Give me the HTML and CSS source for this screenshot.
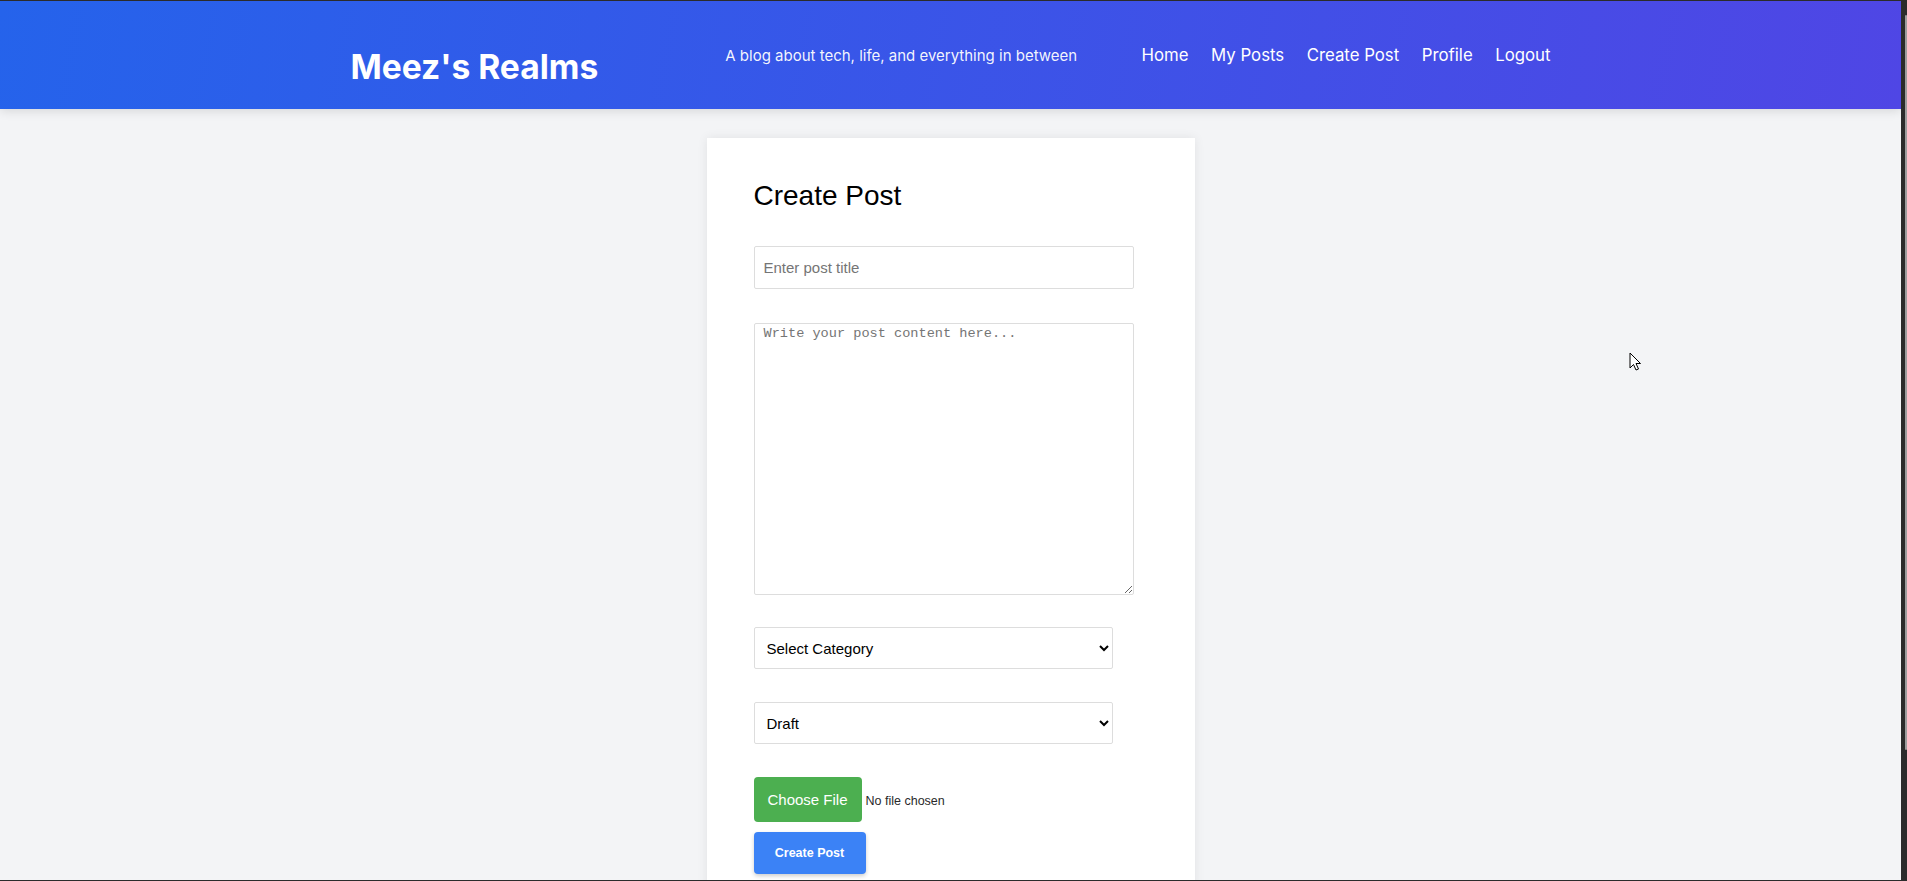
FILE: index.html
```html
<!DOCTYPE html>
<html lang="en">
<head>
<meta charset="utf-8">
<title>Create Post - Meez's Realms</title>
<link rel="stylesheet" href="styles.css">
</head>
<body>
<div class="viewport">
  <header class="site-header">
    <div class="header-inner">
      <a class="logo" href="#">Meez's Realms</a>
      <p class="tagline">A blog about tech, life, and everything in between</p>
      <nav class="nav">
        <a href="#">Home</a>
        <a href="#">My Posts</a>
        <a href="#">Create Post</a>
        <a href="#">Profile</a>
        <a href="#">Logout</a>
      </nav>
    </div>
  </header>
  <main class="main">
    <section class="card">
      <h2 class="card-title">Create Post</h2>
      <form class="post-form">
        <input class="field field-title" type="text" placeholder="Enter post title">
        <textarea class="field field-content" placeholder="Write your post content here..."></textarea>
        <select class="field field-select">
          <option>Select Category</option>
        </select>
        <select class="field field-select">
          <option>Draft</option>
        </select>
        <div class="file-row">
          <label class="file-btn" for="image">Choose File</label>
          <input class="file-input" id="image" type="file">
          <span class="file-name">No file chosen</span>
        </div>
        <button class="submit-btn" type="button">Create Post</button>
      </form>
    </section>
  </main>
  <svg class="cursor" width="14" height="20" viewBox="0 0 14 20"><path d="M1 1 L1 16 L4.5 12.5 L7 18 L9.5 17 L7 11.5 L11.5 11.5 Z" fill="#fff" stroke="#000" stroke-width="1" stroke-linejoin="miter"/></svg>
</div>
<div class="scrollbar"><div class="scroll-thumb"></div></div>
</body>
</html>
```
FILE: styles.css
```css
html {
  background: #2b2b2b;
  height: 100%;
  overflow: hidden;
}

body {
  margin: 0;
  height: 881px;
  display: flex;
  font-family: "Liberation Sans", Arial, sans-serif;
}

.viewport {
  position: relative;
  flex: 1;
  margin: 1px 0;
  background: #f3f4f6;
  overflow: hidden;
}

.scrollbar {
  width: 6px;
  background: #2b2b2b;
  display: flex;
  justify-content: flex-end;
}

.scroll-thumb {
  margin-top: 15px;
  width: 2px;
  height: 735px;
  background: #9d9d9d;
  border-radius: 1px;
}

.site-header {
  height: 108px;
  background: linear-gradient(100deg, #2563eb 0%, #4f46e5 100%);
  box-shadow: 0 2px 10px rgba(0, 0, 0, 0.12);
  color: #fff;
  font-family: Inter, "Noto Sans", sans-serif;
}

.header-inner {
  width: 1200px;
  height: 100%;
  margin: 0 auto;
  display: flex;
  align-items: center;
}

.logo {
  margin-top: 22px;
  font-size: 33.6px;
  font-weight: 700;
  color: #fff;
  text-decoration: none;
}

.tagline {
  margin: 0 0 0 127px;
  font-size: 15px;
  color: rgba(255, 255, 255, 0.95);
}

.nav {
  margin-left: auto;
  display: flex;
  gap: 22.5px;
}

.nav a {
  color: #fff;
  text-decoration: none;
  font-size: 16.8px;
}

.main {
  padding-top: 29px;
  display: flex;
  justify-content: center;
}

.card {
  width: 488px;
  box-sizing: border-box;
  padding: 42px 47px 40px;
  background: #fff;
  box-shadow: 0 0 10px rgba(0, 0, 0, 0.08);
}

.card-title {
  margin: 0 0 34px;
  font-size: 28px;
  font-weight: 400;
  color: #000;
}

.post-form {
  display: flex;
  flex-direction: column;
  align-items: flex-start;
}

.field {
  box-sizing: border-box;
  border: 1px solid #ddd;
  border-radius: 2px;
  background: #fff;
  margin: 0 0 33px;
}

.field-title {
  width: 380px;
  height: 43px;
  padding: 12px 9px;
  margin-bottom: 34px;
  font: 15px "Liberation Sans", Arial, sans-serif;
  color: #000;
}

.field-title::placeholder {
  color: #757575;
}

.field-content {
  width: 380px;
  height: 272px;
  padding: 2px 9px;
  margin-bottom: 32px;
  font: 13.6px "Liberation Mono", monospace;
  resize: vertical;
}

.field-content::placeholder {
  color: #757575;
}

.field-select {
  width: 359px;
  height: 42px;
  padding: 0 8px;
  font: 15px "Liberation Sans", Arial, sans-serif;
  color: #000;
}

.file-row {
  display: flex;
  align-items: center;
  margin-bottom: 10px;
}

.file-btn {
  display: block;
  padding: 14px;
  background: #4caf50;
  color: #fff;
  font-size: 15px;
  line-height: 17px;
  border-radius: 4px;
  cursor: pointer;
}

.file-input {
  display: none;
}

.file-name {
  margin-left: 4px;
  padding-top: 2px;
  font-size: 12.5px;
  color: #2a2a2a;
}

.submit-btn {
  width: 112px;
  height: 42px;
  padding: 0;
  border: none;
  border-radius: 4px;
  background: #3b82f6;
  color: #fff;
  font: 700 12.5px "Liberation Sans", Arial, sans-serif;
  box-shadow: 0 2px 4px rgba(0, 0, 0, 0.2);
}

.cursor {
  position: absolute;
  left: 1629px;
  top: 351px;
}
```
